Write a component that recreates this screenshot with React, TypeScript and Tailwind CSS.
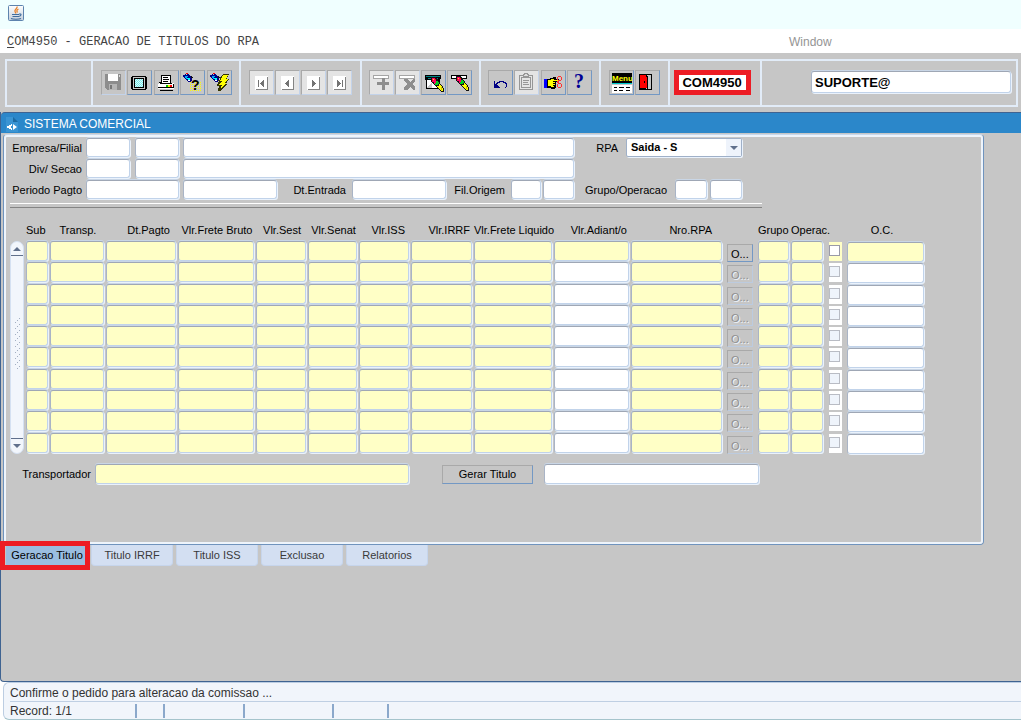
import React from "react";

const field =
  "min-w-0 rounded-[3px] border border-[#c1d3ea] border-t-[#9fa7b5] border-l-[#a9b4c6] px-[3px] outline-none shadow-[1px_1px_0_#eaf2fc,0_-1px_0_#c9d6e6]";
const white = "bg-white";
const cream = "bg-[#ffffc6]";

function ToolButton({ label, off, pale, children }: { label: string; off?: boolean; pale?: boolean; children: React.ReactNode }) {
  return (
    <button
      type="button"
      aria-label={label}
      disabled={off}
      className={
        "flex h-[25px] w-[25px] items-center justify-center border border-t-[#a9a9a9] border-l-[#a9a9a9] " +
        (off ? "border-r-[#c3d3ea] border-b-[#c3d3ea] " : "border-r-[#7398c4] border-b-[#7398c4] ") +
        (pale ? "bg-[#e4e4e4]" : "bg-[#c6c6c6]")
      }
    >
      <svg width="21" height="21" viewBox="0 0 21 21" shapeRendering="crispEdges" aria-hidden="true">
        {children}
      </svg>
    </button>
  );
}

const NavPage = ({ children }: { children: React.ReactNode }) => (
  <>
    <path d="M4 4h13v14H4z" fill="#fff" />
    <path d="M16 5h1v13H5v-1h11z" fill="#848484" />
    <g fill="#737373" transform="translate(1 1)">{children}</g>
  </>
);

const Torch = () => (
  <>
    <path d="M4 1h2v1H4z" fill="#f00" />
    <path d="M5 2h2v1h1v1h1v1h1v4H9v1H6V9H5V8H4V7H3V6H2V5H1V3h2V2h1v1h1z" fill="#000084" />
    <path d="M3 4h3v1H5v2H4V6H3z" fill="#0af" />
    <path d="M5 6h3v2H6V7H5z" fill="#0ff" />
    <path d="M6 8h2v1H6z" fill="#fff" />
    <path d="M9 4h1v1h1v1H9z" fill="#111" />
  </>
);

const Marker = () => (
  <>
    <path d="M7 4h5v1h1v1h1v2h1v1h1v2h1v1h1v1h1v2h1v4h-3v-1h-1v-1h-1v-1h-1v-1h-1v-1h-1v-1h-1v-1h-1v-1H9v-1H8V9H7z" fill="#111" />
    <path d="M8 5h3v1h1v2h1v2h-1v1h-2V9H8z" fill="#f06" />
    <path d="M9 6h1v1H9z" fill="#ff0" />
    <path d="M11 6h1v1h-1zM8 7h1v1H8z" fill="#f00" />
    <path d="M12 8h2v1h1v2h-1v1h-3v-2h1z" fill="#0c2" />
    <path d="M15 11h1v1h1v1h1v2h1v3h-2v-1h-1v-1h-1v-1h-1v-1h-1v-1h2z" fill="#ff0" />
    <path d="M17 14h1v3h-1z" fill="#cb0" />
  </>
);

const columns = [
  { name: "Sub", w: "w-[24px]", head: "text-left" },
  { name: "Transp.", w: "w-[56px]", head: "text-center" },
  { name: "Dt.Pagto", w: "w-[72px]", head: "text-right pr-2" },
  { name: "Vlr.Frete Bruto", w: "w-[78px]", head: "text-center" },
  { name: "Vlr.Sest", w: "w-[52px]", head: "text-center" },
  { name: "Vlr.Senat", w: "w-[51px]", head: "text-center" },
  { name: "Vlr.ISS", w: "w-[52px]", head: "text-right pr-[6px]" },
  { name: "Vlr.IRRF", w: "w-[63px]", head: "text-right pr-1" },
  { name: "Vlr.Frete Liquido", w: "w-[80px]", head: "text-center" },
  { name: "Vlr.Adiant/o", w: "w-[77px]", head: "text-right pr-1" },
  { name: "Nro.RPA", w: "w-[96px]", head: "text-right pr-[15px]" },
  { name: "", w: "w-[31px]", head: "" },
  { name: "Grupo", w: "w-[33px]", head: "text-left" },
  { name: "Operac.", w: "w-[38px]", head: "text-left" },
  { name: "", w: "w-[18px]", head: "" },
  { name: "O.C.", w: "w-[78px]", head: "text-center pr-2" },
];

function Cell({ name, row, tone, pad = "pr-[2px]" }: { name: string; row: number; tone: string; pad?: string }) {
  return (
    <td className={"align-top " + pad}>
      <input aria-label={`${name} ${row}`} className={`${field} ${tone} block h-[20px] w-full`} />
    </td>
  );
}

function Row({ row }: { row: number }) {
  const first = row === 1;
  const open = first ? cream : white;
  return (
    <tr>
      {columns.slice(0, 9).map((c) => (
        <Cell key={c.name} name={c.name} row={row} tone={cream} />
      ))}
      <Cell name="Vlr.Adiant/o" row={row} tone={open} />
      <Cell name="Nro.RPA" row={row} tone={cream} pad="pr-[5px]" />
      <td className="pt-[3px] pr-[5px] align-top">
        <button
          type="button"
          disabled={!first}
          className={
            "block h-[18px] w-full border border-t-[#a9a9a9] border-l-[#a9a9a9] pl-[3px] text-left leading-[18px] " +
            (first
              ? "border-r-[#7398c4] border-b-[#7398c4] text-black"
              : "border-r-[#bccbdf] border-b-[#bccbdf] text-[#8f8f8f] [text-shadow:1px_1px_0_#eef4fb]")
          }
        >
          O...
        </button>
      </td>
      <Cell name="Grupo" row={row} tone={cream} />
      <Cell name="Operac." row={row} tone={cream} pad="pr-[6px]" />
      <td className="pt-[1px] pr-[5px] align-top">
        <div className={"h-[19px] pt-[3px] " + open}>
          <input
            type="checkbox"
            aria-label={`Selecionar ${row}`}
            disabled={!first}
            className={"block h-[11px] w-[11px] appearance-none border " + (first ? "border-[#9a9aa8] bg-white" : "border-[#b9bcc4] bg-[#eff4fb]")}
          />
        </div>
      </td>
      <Cell name="O.C." row={row} tone={open} pad="pt-[1px] pr-px" />
    </tr>
  );
}

const section = "flex shrink-0 items-center justify-center border-r-2 border-[#e2ecf8] pb-[2px]";

export default function App() {
  return (
    <div className="flex min-h-screen flex-col bg-white font-['Liberation_Sans',Arial,sans-serif] text-[11px] leading-[14px] text-black">
      <header className="flex h-[29px] items-center bg-[#f0ffff] pl-2">
        <svg width="16" height="16" viewBox="0 0 16 16" aria-label="Java" role="img" className="mb-1">
          <defs>
            <linearGradient id="tile" x1="0" y1="0" x2="0" y2="1">
              <stop offset="0" stopColor="#fff" />
              <stop offset="1" stopColor="#c4cfdc" />
            </linearGradient>
            <pattern id="dots" width="2" height="2" patternUnits="userSpaceOnUse">
              <path d="M0 0h1v1H0z" fill="#ff0" />
            </pattern>
            <pattern id="mesh" width="2" height="2" patternUnits="userSpaceOnUse">
              <path d="M0 0h2v2H0z" fill="#6ef0f0" />
              <path d="M0 0h1v1H0zM1 1h1v1H1z" fill="#e4f8f8" />
            </pattern>
          </defs>
          <rect x=".5" y=".5" width="15" height="15" rx="1" fill="url(#tile)" stroke="#5d83ae" />
          <path d="M9 1.500c1 2-3 3-2 5l1 2M10.500 4C8.500 5 8.500 6 9.500 7.500" fill="none" stroke="#e8822a" strokeWidth="1.300" />
          <path d="M4 9.500h7M4.500 11.500h6M11 9c3-.5 2.500 2-.5 2.500M3 13.500c2 1 8 1 10 0" fill="none" stroke="#3f6c9d" strokeWidth="1.100" />
        </svg>
      </header>

      <nav className="flex h-[24px] items-center bg-white pt-px pl-[7px]">
        <button type="button" className="w-[782px] shrink-0 text-left font-['Liberation_Mono','Courier_New',monospace] text-[12px] text-[#444]">
          <span className="underline underline-offset-2">C</span>OM4950 - GERACAO DE TITULOS DO RPA
        </button>
        <button type="button" className="text-[12px] text-[#949494]">
          Window
        </button>
      </nav>

      <div className="bg-[#c6c6c6] pt-[6px] pr-[3px] pb-[5px] pl-[5px]">
        <div className="flex h-[48px] border-2 border-[#e2ecf8]">
          <div className={section + " w-[86px]"} />
          <div className={section + " w-[148px]"}>
            <div className="flex w-[131px] justify-between">
              <ToolButton label="Salvar" off>
                <path d="M2 2h16v16H4l-2-2z" fill="#8d8d8d" />
                <path d="M5 2h10v7H5z" fill="#fff" />
                <path d="M6 12h8v6H6z" fill="#b5b5b5" />
                <path d="M7 13h2v4H7z" fill="#777" />
                <path d="M16 3h1v2h-1z" fill="#ddd" />
              </ToolButton>
              <ToolButton label="Tela">
                <path d="M3 4h14v1h1v12h-1v1H3v-1H2V5h1z" fill="#000" />
                <path d="M4 5h12v12H4z" fill="#c6c6c6" />
                <path d="M5 6h10v10H5z" fill="#000" />
                <path d="M6 7h8v8H6z" fill="url(#mesh)" />
              </ToolButton>
              <ToolButton label="Imprimir">
                <path d="M5 3h9l1 1v7H5z" fill="#000" />
                <path d="M6 4h8v7H6z" fill="#fff" />
                <path d="M7 5h5v1H7zM7 7h6v1H7zM7 9h5v1H7z" fill="#000" />
                <path d="M3 11h14l1 1v5H2v-5z" fill="#fff" />
                <path d="M3 10h2v1H3zM4 11h12v1H4zM2 15h16v1H2zM17 12h1v4h-1zM4 18h13v1H4z" fill="#000" />
                <path d="M10 13h2v2h-2z" fill="#0c0" />
                <path d="M12 13h2v2h-2z" fill="#fe0" />
                <path d="M14 13h2v2h-2z" fill="#f00" />
              </ToolButton>
              <ToolButton label="Entrar consulta">
                <path d="M8 10h12v10H8z" fill="url(#dots)" />
                <Torch />
                <text x="9" y="18" fontSize="14" fontWeight="bold" fill="#000">?</text>
              </ToolButton>
              <ToolButton label="Executar consulta">
                <Torch />
                <path d="M14 2h6v1h-1v2h-1v2h2v1h-1v1h-1v2h-1v1h1v1h-1v1h-1v1h-1v1h-1v1h-1v1h-1v1H9v-3h1v-2H8v-2h1v-2h1v-1h-1V8h2V5h1V4h1V3h1z" fill="#333300" />
                <path d="M14 3h5l-2 4h2l-3 4h1l-6 7 2-5h-3l3-4h-2z" fill="#ff0" />
              </ToolButton>
            </div>
          </div>
          <div className={section + " w-[121px]"}>
            <div className="flex w-[104px] justify-between">
              <ToolButton label="Primeiro" off pale>
                <NavPage><path d="M6 7h1v7H6zM11 7h1v7h-1v-1h-1v-1H9v-1H8v-1h1V9h1V8h1z" /></NavPage>
              </ToolButton>
              <ToolButton label="Anterior" off pale>
                <NavPage><path d="M10 7h1v7h-1v-1H9v-1H8v-1H7v-1h1V9h1V8h1z" /></NavPage>
              </ToolButton>
              <ToolButton label="Proximo" off pale>
                <NavPage><path d="M8 7h1v1h1v1h1v1h1v1h-1v1h-1v1H9v1H8z" /></NavPage>
              </ToolButton>
              <ToolButton label="Ultimo" off pale>
                <NavPage><path d="M7 7h1v1h1v1h1v1h1v1h-1v1H9v1H8v1H7zM12 7h1v7h-1z" /></NavPage>
              </ToolButton>
            </div>
          </div>
          <div className={section + " w-[119px]"}>
            <div className="flex w-[104px] justify-between">
              <ToolButton label="Inserir registro" off pale>
                <path d="M2 3h16v4H2z" fill="#a5a5a5" /><path d="M3 4h14v2H3z" fill="#fff" />
                <path d="M11 6h3v4h4v3h-4v5h-3v-5H6v-3h5z" fill="#8e8e8e" />
              </ToolButton>
              <ToolButton label="Remover registro" off pale>
                <path d="M2 3h16v4H2z" fill="#a5a5a5" /><path d="M3 4h14v2H3z" fill="#fff" />
                <path d="M7 7h3l3 3 3-3h2v2l-3 3 3 3v3h-2l-3-3-3 3H7v-3l3-3-3-3z" fill="#8e8e8e" />
              </ToolButton>
              <ToolButton label="Limpar bloco">
                <path d="M2 3h16v4h-1v5h-2v5H3V8H2z" fill="#000" />
                <path d="M3 4h14v1H3zM5 6h10v1H5z" fill="#008484" />
                <path d="M4 8h11v8H4z" fill="#fff" />
                <path d="M4 16l5-6v6z" fill="#c6c6c6" />
                <g transform="translate(1 1)"><Marker /></g>
              </ToolButton>
              <ToolButton label="Limpar registro">
                <path d="M2 3h16v4H2z" fill="#000" /><path d="M3 4h14v2H3z" fill="#fff" />
                <Marker />
              </ToolButton>
            </div>
          </div>
          <div className={section + " w-[120px]"}>
            <div className="flex w-[105px] justify-between">
              <ToolButton label="Desfazer">
                <path d="M4 9h1v3h1v-1h1v-1h2V9h5v1h2v1h1v4h-1v1h-1v-1h1v-3h-1v-1h-2v-1h-3v1H8v1H7v1h1v1h1v1h1v1H4z" fill="#000084" />
              </ToolButton>
              <ToolButton label="Colar" off pale>
                <g fill="none" stroke="#969696" strokeWidth="1">
                  <path d="M3.500 3.500h13v14h-13zM5.500 5.500h9v10h-9z" />
                  <path d="M7.500 4.500v-2h1v-1h3v1h1v2z" fill="#ddd" />
                  <path d="M7 8.500h6M7 10.500h5M7 12.500h6" />
                </g>
              </ToolButton>
              <ToolButton label="Recortar">
                <path d="M1 7h3v9H1z" fill="#00f" />
                <path d="M4 7h3V6h3V5h3v2h3v3h-3v6h-1v1H8v-1H4z" fill="#000" />
                <path d="M5 8h3V7h3v1h4v1h-5v1h2v1h-2v1h2v1h-2v1h1v1H8v-1H5z" fill="#ff0" />
                <path d="M15 4h3v1h1v3h-1v1h-3V8h-1V5h1zM15 5v3h3V5zM15 11h3v1h1v3h-1v1h-3v-1h-1v-3h1zM15 12v3h3v-3z" fill="#f33" fillRule="evenodd" />
                <path d="M14 9h2v2h-2z" fill="#f33" />
              </ToolButton>
              <ToolButton label="Ajuda">
                <text x="5" y="16" fontSize="20" fontWeight="bold" fill="#000094" className="font-['Liberation_Serif',serif]">?</text>
              </ToolButton>
            </div>
          </div>
          <div className={section + " w-[69px]"}>
            <div className="flex w-[51px] justify-between">
              <ToolButton label="Menu">
                <path d="M1 1h20v10H1z" fill="#000" />
                <text x="1" y="9" fontSize="8" fontWeight="bold" fill="#ff0">Menu</text>
                <path d="M1 11h20v1H1z" fill="#0cc" />
                <path d="M1 13h20v8H1z" fill="#fff" />
                <path d="M3 15h3v1H3zM8 15h5v1H8zM15 15h4v1h-4zM3 18h3v1H3zM8 18h4v1H8zM15 18h4v1h-4z" fill="#000" />
              </ToolButton>
              <ToolButton label="Sair">
                <path d="M2 2h13v16H2z" fill="#000" />
                <path d="M9 3h5v14H9z" fill="#c6c6c6" />
                <path d="M3 3h6l1 2v12l-1-1H3z" fill="#f00" />
                <path d="M9 3h1v1h1v14h-1V5H9zM7 9h1v2H7z" fill="#000" />
              </ToolButton>
            </div>
          </div>
          <div className={section + " w-[92px]"}>
            <div className="mr-[6px] flex h-[25px] w-[77px] items-center justify-center border-[5px] border-[#ed1c24] bg-white text-[13px] font-bold leading-[15px]">COM4950</div>
          </div>
          <div className="flex min-w-0 flex-1 items-center justify-end pr-[5px] pb-[2px]">
            <input aria-label="Usuario" defaultValue="SUPORTE@" className={`${field} ${white} h-[22px] w-[200px] text-[13px] font-bold`} />
          </div>
        </div>
      </div>

      <main className="flex flex-1 flex-col rounded-bl-[4px] border-b border-l border-[#3f6391] bg-[#c6c6c6]">
        <h1 className="flex h-[21px] items-center gap-[5px] rounded-tl-[4px] border-t border-[#3f6391] bg-[#2b87ca] pt-px pl-[5px] text-[12px] text-white">
          <svg width="13" height="16" viewBox="0 0 13 16" aria-hidden="true">
            <path d="M0 1h7v5h5v10H0z" fill="#3a94d3" />
            <path d="M7 1l5 5H7z" fill="#1d6ba2" />
            <path d="M5 8v1H3v4h2v1h1v-2H5v-2h1V8zM1 10h2v2H1zM7 8l4 3-4 3z" fill="#fff" />
          </svg>
          SISTEMA COMERCIAL
        </h1>

        <section className="mt-px mr-[37px] ml-[2px] rounded-[4px] border border-[#6f93bd] border-t-[#c7d8ec]">
          <div className="h-[409px] rounded-[3px] border-2 border-[#eef4fb] pt-[1px] pl-[4px]">
            <form className="flex flex-col gap-[2px]" onSubmit={(e) => e.preventDefault()}>
              <div className="flex items-center">
                <label htmlFor="empresa" className="mr-1 w-[72px] text-right">Empresa/Filial</label>
                <input id="empresa" className={`${field} ${white} mr-[5px] h-[19px] w-[44px]`} />
                <input aria-label="Filial" className={`${field} ${white} mr-[4px] h-[19px] w-[44px]`} />
                <input aria-label="Nome empresa" className={`${field} ${white} h-[19px] w-[391px]`} />
                <label htmlFor="rpa" className="w-[52px] pr-2 text-right">RPA</label>
                <div className="relative">
                  <select id="rpa" className="block h-[19px] w-[116px] appearance-none rounded-[2px] border border-[#9fb0c8] bg-white pl-1 text-[11px] leading-[15px] font-bold shadow-[1px_1px_0_#eaf2fc] outline-none">
                    <option>Saida - S</option>
                  </select>
                  <svg width="15" height="17" viewBox="0 0 15 17" className="pointer-events-none absolute top-px right-px" aria-hidden="true">
                    <path d="M0 0h15v17H0z" fill="#eef3fb" />
                    <path d="M4 7h8l-4 4z" fill="#60708c" />
                  </svg>
                </div>
              </div>
              <div className="flex items-center">
                <label htmlFor="divisao" className="mr-1 w-[72px] text-right">Div/ Secao</label>
                <input id="divisao" className={`${field} ${white} mr-[5px] h-[19px] w-[44px]`} />
                <input aria-label="Secao" className={`${field} ${white} mr-[4px] h-[19px] w-[44px]`} />
                <input aria-label="Nome divisao" className={`${field} ${white} h-[19px] w-[391px]`} />
              </div>
              <div className="flex items-center">
                <label htmlFor="periodo" className="mr-1 w-[72px] text-right">Periodo Pagto</label>
                <input id="periodo" className={`${field} ${white} mr-[4px] h-[19px] w-[93px]`} />
                <input aria-label="Periodo final" className={`${field} ${white} h-[19px] w-[94px]`} />
                <label htmlFor="entrada" className="w-[75px] pr-[6px] text-right">Dt.Entrada</label>
                <input id="entrada" className={`${field} ${white} h-[19px] w-[94px]`} />
                <label htmlFor="origem" className="w-[65px] pr-[6px] text-right">Fil.Origem</label>
                <input id="origem" className={`${field} ${white} mr-[2px] h-[19px] w-[30px]`} />
                <input aria-label="Filial de origem" className={`${field} ${white} h-[19px] w-[31px]`} />
                <label htmlFor="grupo" className="w-[101px] pr-2 text-right">Grupo/Operacao</label>
                <input id="grupo" className={`${field} ${white} mr-[3px] h-[19px] w-[32px]`} />
                <input aria-label="Operacao" className={`${field} ${white} h-[19px] w-[32px]`} />
              </div>
            </form>

            <div className="mt-[4px] h-[5px] w-[752px] border-t border-b border-t-white border-b-[#848484]" />

            <div className="mt-[15px] flex items-end">
              <div className="mr-[2px] flex h-[213px] w-[14px] shrink-0 flex-col rounded-full border border-[#d5e1f2] bg-[#f2f6fc]">
                <button type="button" aria-label="Rolar para cima" className="flex h-[14px] items-center justify-center border-b border-[#60708c]">
                  <svg width="8" height="4" viewBox="0 0 8 4" aria-hidden="true"><path d="M4 0l4 4H0z" fill="#60708c" /></svg>
                </button>
                <div className="flex flex-1 items-center justify-center pb-2">
                  <svg width="8" height="52" viewBox="0 0 8 52" shapeRendering="crispEdges" aria-hidden="true">
                    <path d="M6.500 1v51" stroke="#a3afc2" strokeDasharray="1 5" />
                    <path d="M4.500 3v49" stroke="#a3afc2" strokeDasharray="1 5" />
                    <path d="M2.500 5v47" stroke="#a3afc2" strokeDasharray="1 5" />
                  </svg>
                </div>
                <button type="button" aria-label="Rolar para baixo" className="flex h-[15px] items-center justify-center border-t border-[#60708c]">
                  <svg width="8" height="4" viewBox="0 0 8 4" aria-hidden="true"><path d="M0 0h8L4 4z" fill="#60708c" /></svg>
                </button>
              </div>
              <table className="h-[231px] w-[899px] table-fixed border-collapse">
                <thead>
                  <tr className="h-[18px]">
                    {columns.map((c, i) => (
                      <th key={i} scope="col" className={`${c.w} ${c.head} h-[18px] align-top font-normal whitespace-nowrap`}>
                        {c.name}
                      </th>
                    ))}
                  </tr>
                </thead>
                <tbody>
                  {[1, 2, 3, 4, 5, 6, 7, 8, 9, 10].map((r) => (
                    <Row key={r} row={r} />
                  ))}
                </tbody>
              </table>
            </div>

            <div className="mt-[10px] flex items-center">
              <label htmlFor="transportador" className="mr-1 w-[81px] text-right">Transportador</label>
              <input id="transportador" className={`${field} ${cream} mr-[33px] h-[20px] w-[314px]`} />
              <button type="button" className="mr-[11px] h-[19px] w-[91px] border border-t-[#a9a9a9] border-r-[#7398c4] border-b-[#7398c4] border-l-[#a9a9a9] leading-[16px]">
                Gerar Titulo
              </button>
              <input aria-label="Resultado" className={`${field} ${white} h-[20px] w-[215px]`} />
            </div>
          </div>
        </section>

        <div role="tablist" className="flex gap-[3px] pl-[5px]">
          <div className="relative">
            <button type="button" role="tab" aria-selected="true" className="block h-[21px] w-[82px] border border-t-0 border-[#9abde0] bg-[#9abde0]">Geracao Titulo</button>
            <div className="pointer-events-none absolute -top-1 -right-[2px] -bottom-1 -left-[6px] border-[5px] border-[#ed1c24]" />
          </div>
          {["Titulo IRRF", "Titulo ISS", "Exclusao", "Relatorios"].map((t) => (
            <button key={t} type="button" role="tab" aria-selected="false" className="h-[21px] w-[82px] rounded-b-[4px] border border-t-0 border-[#c6d5ec] bg-[#d3dff2] text-[#3a3a3a]">
              {t}
            </button>
          ))}
        </div>
      </main>

      <footer className="pl-[3px] text-[12px] text-[#333]">
        <div className="rounded-l-[6px] border border-r-0 border-[#bccde2] border-b-[#a5c4cc] bg-[#f1f5fb] pl-[6px]">
          <p className="h-[19px] border-b border-[#bfcfe3] leading-[20px]">Confirme o pedido para alteracao da comissao ...</p>
          <div className="flex h-[17px] items-center">
            <span className="w-[125px]">Record: 1/1</span>
            <span className="h-[14px] w-[28px] border-l-2 border-[#8ba8cb]" />
            <span className="h-[14px] w-[80px] border-l-2 border-[#8ba8cb]" />
            <span className="h-[14px] w-[89px] border-l-2 border-[#8ba8cb]" />
            <span className="h-[14px] w-[55px] border-l-2 border-[#8ba8cb]" />
            <span className="h-[14px] border-l-2 border-[#8ba8cb]" />
          </div>
        </div>
      </footer>
    </div>
  );
}
